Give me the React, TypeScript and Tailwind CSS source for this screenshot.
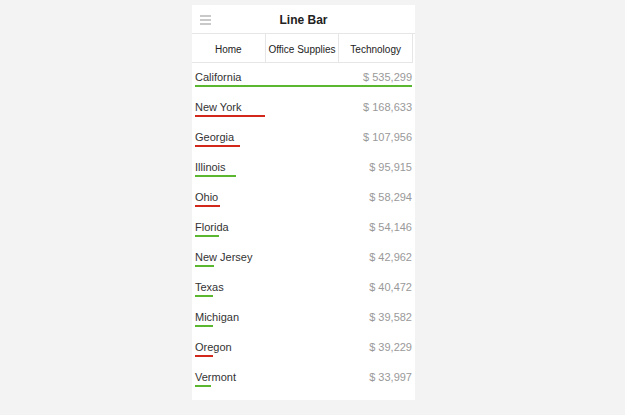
const rows = [
  { name: "California", value: 535299, up: true },
  { name: "New York", value: 168633, up: false },
  { name: "Georgia", value: 107956, up: false },
  { name: "Illinois", value: 95915, up: true },
  { name: "Ohio", value: 58294, up: false },
  { name: "Florida", value: 54146, up: true },
  { name: "New Jersey", value: 42962, up: true },
  { name: "Texas", value: 40472, up: true },
  { name: "Michigan", value: 39582, up: true },
  { name: "Oregon", value: 39229, up: false },
  { name: "Vermont", value: 33997, up: true },
];

const max = 535299;
const tabs = ["Home", "Office Supplies", "Technology"];

export default function App() {
  return (
    <div className="min-h-[415px] w-full bg-[#f3f3f3] pt-[5px] font-['Liberation_Sans',Arial,sans-serif]">
      <div className="ml-[192px] w-[223px] bg-white pb-[7px]">
        {/* header */}
        <div className="relative flex h-[29px] items-center justify-center border-b border-[#e6e6e6]">
          <div className="absolute left-[8px] top-[10px] flex flex-col gap-[2px]">
            <span className="block h-[2px] w-[11px] bg-[#c9c9c9]" />
            <span className="block h-[2px] w-[11px] bg-[#c9c9c9]" />
            <span className="block h-[2px] w-[11px] bg-[#c9c9c9]" />
          </div>
          <span className="pt-[2px] text-[12px] font-bold text-[#222]">Line Bar</span>
        </div>

        {/* tabs */}
        <div className="grid h-[29px] w-[221px] grid-cols-3 border-b border-[#e6e6e6]">
          {tabs.map((t) => (
            <div
              key={t}
              className="flex items-center justify-center border-r border-[#e6e6e6] pt-[2px] text-[10px] text-[#222]"
            >
              {t}
            </div>
          ))}
        </div>

        {/* rows */}
        <div className="px-[3px]">
          {rows.map((r) => (
            <div key={r.name} className="h-[30px] pt-[8px]">
              <div className="flex h-[13px] items-center justify-between text-[11px] leading-[13px]">
                <span className="text-[#333]">{r.name}</span>
                <span className="text-[#999]">$ {r.value.toLocaleString("en-US")}</span>
              </div>
              <div
                className={`mt-[1px] h-[2px] ${r.up ? "bg-[#5bb72f]" : "bg-[#d2281c]"}`}
                style={{ width: `${2 + (r.value / max) * 215}px` }}
              />
            </div>
          ))}
        </div>
      </div>
    </div>
  );
}
